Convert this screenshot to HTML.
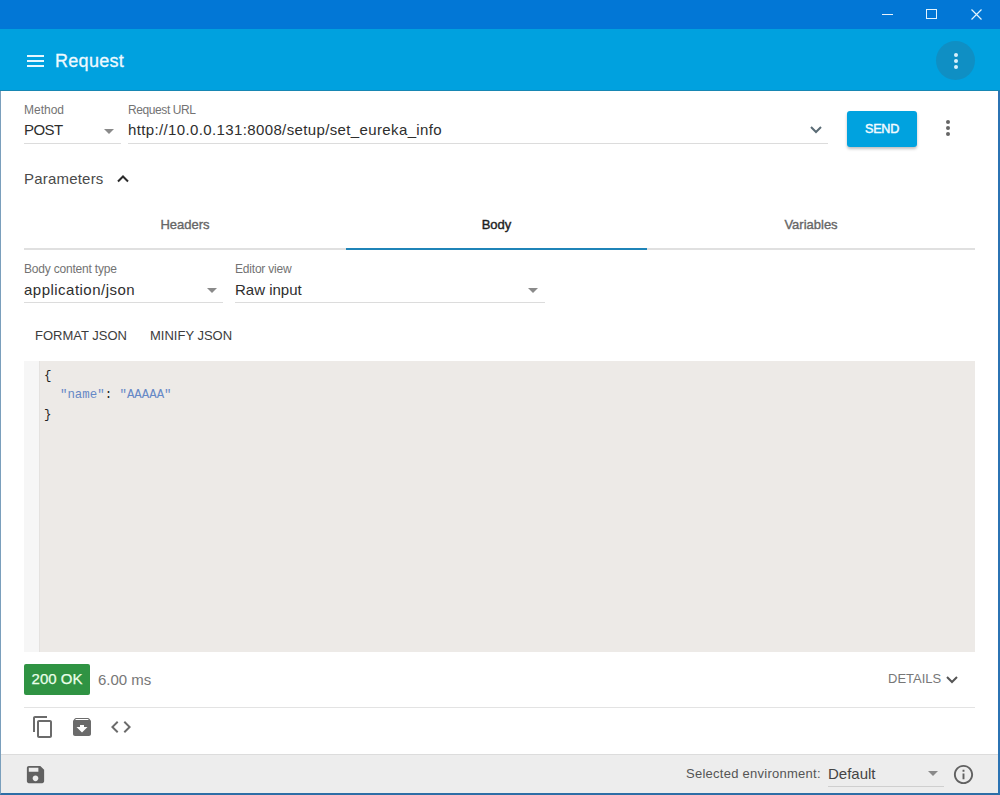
<!DOCTYPE html>
<html><head><meta charset="utf-8">
<style>
*{box-sizing:border-box;margin:0;padding:0}
html,body{width:1000px;height:795px;overflow:hidden;background:#fff;font-family:"Liberation Sans",sans-serif}
.abs{position:absolute}
#win{position:absolute;left:0;top:0;width:1000px;height:795px;background:#fff;border-left:1px solid #7a9fbc;border-right:2px solid #2b73b3;border-bottom:2px solid #2d6ea6}
#title{position:absolute;left:0;top:0;width:1000px;height:29px;background:#0277d6}
#appbar{position:absolute;left:0;top:29px;width:1000px;height:62px;background:#00a1df;border-bottom:1px solid #1787b3}
#ab{position:absolute;left:0;top:1px;width:1000px;height:60px}
.t{position:absolute;white-space:nowrap;line-height:1}
.lbl{font-size:12px;color:#737373}
.val{font-size:15px;color:#2e2e2e}
.uline{position:absolute;height:1px;background:#dcdcdc}
.tri{position:absolute;width:0;height:0;border-left:5px solid transparent;border-right:5px solid transparent;border-top:5px solid #8a8a8a}
</style></head><body>
<div id="win"></div>
<div id="title">
  <div class="abs" style="left:882px;top:14px;width:11px;height:1px;background:#e8f2fb"></div>
  <div class="abs" style="left:926px;top:9px;width:11px;height:10px;border:1px solid #e3f3fd"></div>
  <svg class="abs" style="left:971px;top:9px" width="11" height="11" viewBox="0 0 11 11"><path d="M0.5 0.5L10.5 10.5M10.5 0.5L0.5 10.5" stroke="#e3f3fd" stroke-width="1.2"/></svg>
</div>
<div id="appbar"><div id="ab">
  <div class="abs" style="left:27px;top:25px;width:17px;height:2px;background:#e6f7ff"></div>
  <div class="abs" style="left:27px;top:30px;width:17px;height:2px;background:#e6f7ff"></div>
  <div class="abs" style="left:27px;top:35px;width:17px;height:2px;background:#e6f7ff"></div>
  <div class="t" style="left:55px;top:22px;font-size:18px;color:#eefaff;letter-spacing:0.3px;-webkit-text-stroke:0.3px #eefaff">Request</div>
  <div class="abs" style="left:936px;top:11px;width:39px;height:39px;border-radius:50%;background:#0f8fc4"></div>
  <div class="abs" style="left:954px;top:23px;width:4px;height:4px;border-radius:50%;background:#d8f0fb"></div>
  <div class="abs" style="left:954px;top:29px;width:4px;height:4px;border-radius:50%;background:#d8f0fb"></div>
  <div class="abs" style="left:954px;top:35px;width:4px;height:4px;border-radius:50%;background:#d8f0fb"></div>
</div></div>

<!-- method / url -->
<div class="t lbl" style="left:24px;top:104px">Method</div>
<div class="t val" style="left:24px;top:122px;letter-spacing:-0.6px">POST</div>
<div class="tri" style="left:104px;top:129px"></div>
<div class="uline" style="left:24px;top:143px;width:97px"></div>
<div class="t lbl" style="left:128px;top:104px;letter-spacing:-0.4px">Request URL</div>
<div class="t val" style="left:128px;top:122px;letter-spacing:0.37px">http://10.0.0.131:8008/setup/set_eureka_info</div>
<div class="uline" style="left:128px;top:143px;width:700px"></div>
<svg class="abs" style="left:809px;top:125px" width="14" height="10" viewBox="0 0 14 10"><path d="M2 2L7 7L12 2" fill="none" stroke="#5a6b75" stroke-width="2"/></svg>
<div class="abs" style="left:847px;top:111px;width:70px;height:36px;background:#00a2df;border-radius:3px;box-shadow:0 2px 3px rgba(0,0,0,.25)"></div>
<div class="t" style="left:847px;top:123px;width:70px;text-align:center;font-size:12.6px;letter-spacing:-0.25px;color:#f4fbff;-webkit-text-stroke:0.45px #f4fbff">SEND</div>
<div class="abs" style="left:946px;top:120px;width:4px;height:4px;border-radius:50%;background:#666"></div>
<div class="abs" style="left:946px;top:126px;width:4px;height:4px;border-radius:50%;background:#666"></div>
<div class="abs" style="left:946px;top:132px;width:4px;height:4px;border-radius:50%;background:#666"></div>

<!-- parameters -->
<div class="t" style="left:24px;top:171px;font-size:15px;color:#4a4a4a;letter-spacing:0.2px">Parameters</div>
<svg class="abs" style="left:116px;top:174px" width="14" height="10" viewBox="0 0 14 10"><path d="M2 7.5L7 2.5L12 7.5" fill="none" stroke="#2a2a2a" stroke-width="2"/></svg>

<!-- tabs -->
<div class="t" style="left:24px;top:218px;width:322px;text-align:center;font-size:13px;color:#666;-webkit-text-stroke:0.35px #666">Headers</div>
<div class="t" style="left:346px;top:218px;width:301px;text-align:center;font-size:13px;color:#1e1e1e;-webkit-text-stroke:0.4px #1e1e1e">Body</div>
<div class="t" style="left:647px;top:218px;width:328px;text-align:center;font-size:13px;color:#666;-webkit-text-stroke:0.35px #666">Variables</div>
<div class="abs" style="left:24px;top:248px;width:951px;height:2px;background:#e0e0e0"></div>
<div class="abs" style="left:346px;top:248px;width:301px;height:2px;background:#1f84b8"></div>

<!-- body content type -->
<div class="t lbl" style="left:24px;top:263px;letter-spacing:-0.2px">Body content type</div>
<div class="t val" style="left:24px;top:282px;letter-spacing:0.48px">application/json</div>
<div class="tri" style="left:207px;top:288px"></div>
<div class="uline" style="left:24px;top:302px;width:199px"></div>
<div class="t lbl" style="left:235px;top:263px;letter-spacing:-0.2px">Editor view</div>
<div class="t val" style="left:235px;top:282px">Raw input</div>
<div class="tri" style="left:528px;top:288px"></div>
<div class="uline" style="left:235px;top:302px;width:310px"></div>

<div class="t" style="left:35px;top:329px;font-size:13px;color:#3c3c3c">FORMAT JSON</div>
<div class="t" style="left:150px;top:329px;font-size:13px;color:#3c3c3c">MINIFY JSON</div>

<!-- editor -->
<div class="abs" style="left:24px;top:361px;width:951px;height:291px;background:#edeae7"></div>
<div class="abs" style="left:24px;top:361px;width:15px;height:291px;background:#f6f6f6"></div><div class="abs" style="left:39px;top:361px;width:1px;height:291px;background:#e4e2e0"></div>
<div class="t" style="left:44px;top:370px;font-family:'Liberation Mono',monospace;font-size:12.4px;color:#222">{</div>
<div class="t" style="left:60px;top:389px;font-family:'Liberation Mono',monospace;font-size:12.4px;color:#222"><span style="color:#6688c6">"name"</span>: <span style="color:#6688c6">"AAAAA"</span></div>
<div class="t" style="left:44px;top:409px;font-family:'Liberation Mono',monospace;font-size:12.4px;color:#222">}</div>

<!-- status -->
<div class="abs" style="left:24px;top:664px;width:66px;height:31px;background:#2f9343;border-radius:2px"></div>
<div class="t" style="left:24px;top:671px;width:66px;text-align:center;font-size:15px;color:#eaffea;-webkit-text-stroke:0.25px #eaffea">200 OK</div>
<div class="t" style="left:98px;top:672px;font-size:15px;color:#777">6.00 ms</div>
<div class="t" style="left:888px;top:672px;font-size:13px;color:#777">DETAILS</div>
<svg class="abs" style="left:945px;top:675px" width="14" height="10" viewBox="0 0 14 10"><path d="M2 2L7 7L12 2" fill="none" stroke="#555" stroke-width="2"/></svg>
<div class="abs" style="left:24px;top:707px;width:951px;height:1px;background:#e3e3e3"></div>

<svg class="abs" style="left:31px;top:715px" width="24" height="24" viewBox="0 0 24 24"><path fill="#6b6b6b" d="M16 1H4c-1.1 0-2 .9-2 2v14h2V3h12V1zm3 4H8c-1.1 0-2 .9-2 2v14c0 1.1.9 2 2 2h11c1.1 0 2-.9 2-2V7c0-1.1-.9-2-2-2zm0 16H8V7h11v14z"/></svg>
<svg class="abs" style="left:70px;top:715px" width="24" height="24" viewBox="0 0 24 24"><path fill="#6b6b6b" d="M20.54 5.23l-1.39-1.68C18.88 3.21 18.47 3 18 3H6c-.47 0-.88.21-1.16.55L3.46 5.23C3.17 5.57 3 6.02 3 6.5V19c0 1.1.89 2 2 2h14c1.1 0 2-.9 2-2V6.5c0-.48-.17-.93-.46-1.27zM12 17.5L6.5 12H10v-2h4v2h3.5L12 17.5zM5.12 5l.81-1h12l.94 1H5.12z"/></svg>
<svg class="abs" style="left:109px;top:715px" width="24" height="24" viewBox="0 0 24 24"><path fill="#6b6b6b" d="M9.4 16.6L4.8 12l4.6-4.6L8 6l-6 6 6 6 1.4-1.4zm5.2 0l4.6-4.6-4.6-4.6L16 6l6 6-6 6-1.4-1.4z"/></svg>
<!-- bottom -->
<div class="abs" style="left:1px;top:754px;width:997px;height:39px;background:#ededed;border-top:1px solid #dcdcdc"></div>
<div class="t" style="left:686px;top:767px;font-size:13px;color:#555;letter-spacing:0.26px">Selected environment:</div>
<div class="t" style="left:828px;top:766px;font-size:15px;color:#444">Default</div>
<div class="tri" style="left:928px;top:771px"></div>
<div class="uline" style="left:828px;top:786px;width:116px;background:#cfcfcf"></div>
<svg class="abs" style="left:24px;top:763px" width="23" height="23" viewBox="0 0 24 24"><path fill="#616161" d="M17 3H5c-1.11 0-2 .9-2 2v14c0 1.1.89 2 2 2h14c1.1 0 2-.9 2-2V7l-4-4zm-5 16c-1.66 0-3-1.34-3-3s1.34-3 3-3 3 1.34 3 3-1.34 3-3 3zm3-10H5V5h10v4z"/></svg>
<svg class="abs" style="left:952px;top:763px" width="23" height="23" viewBox="0 0 24 24"><path fill="#616161" d="M11 17h2v-6h-2v6zm1-15C6.48 2 2 6.48 2 12s4.48 10 10 10 10-4.48 10-10S17.52 2 12 2zm0 18c-4.41 0-8-3.59-8-8s3.59-8 8-8 8 3.59 8 8-3.59 8-8 8zM11 9h2V7h-2v2z"/></svg>
</body></html>
